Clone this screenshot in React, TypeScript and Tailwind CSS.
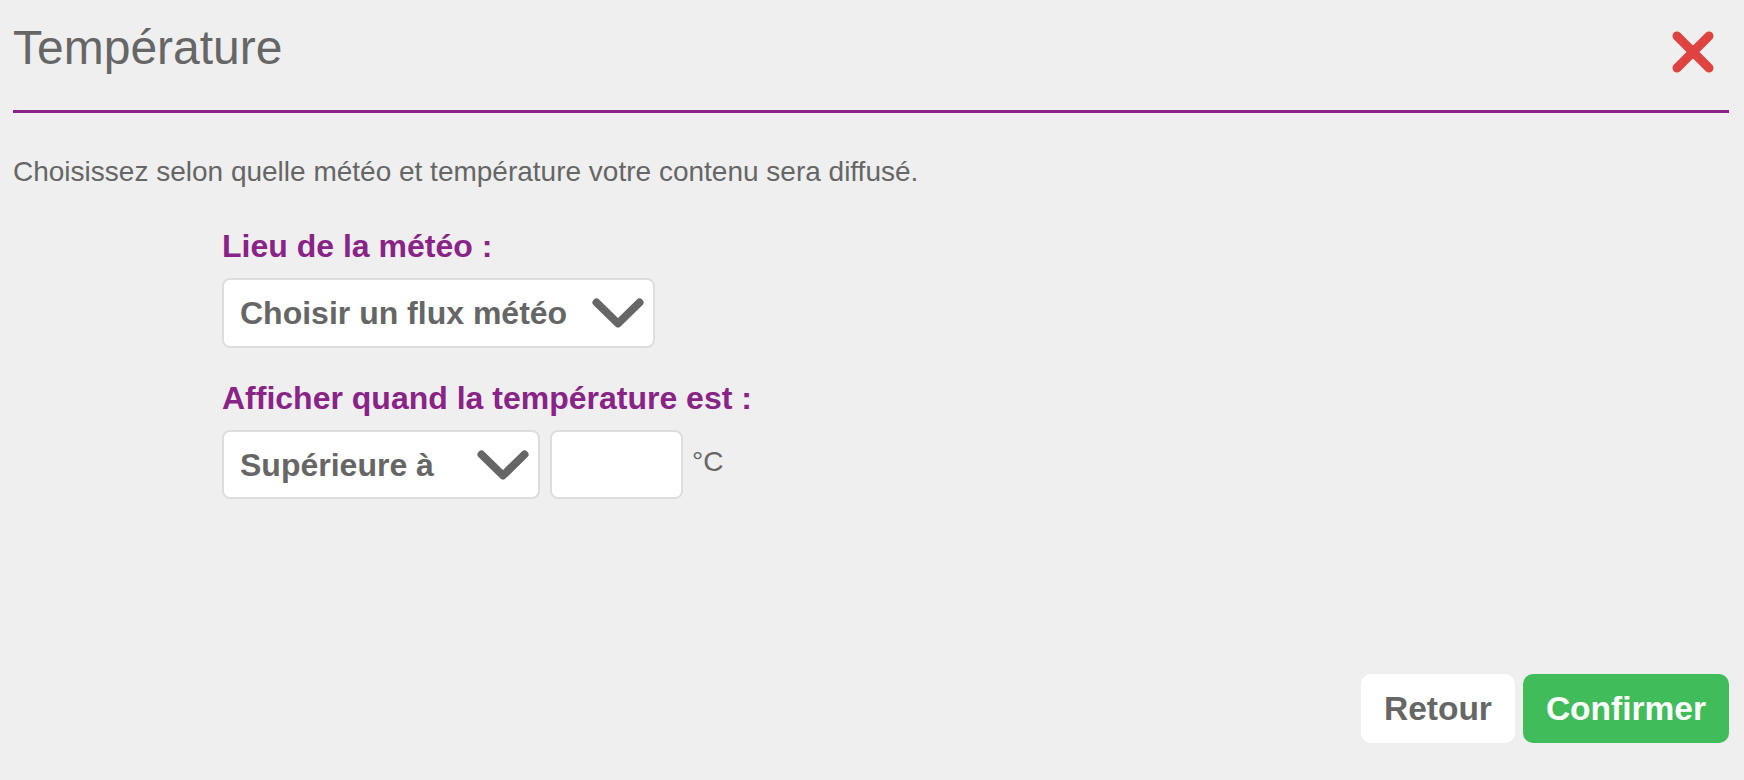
import React from "react";

function Chevron() {
  return (
    <svg width="52" height="30" viewBox="0 0 52 30" fill="none" className="shrink-0">
      <polyline
        points="4.5,4.5 26,25.5 47.5,4.5"
        stroke="#666666"
        strokeWidth="8"
        strokeLinecap="round"
        strokeLinejoin="round"
      />
    </svg>
  );
}

export default function App() {
  return (
    <div className="w-full h-[780px] bg-[#efefef] pl-[13px] pr-[15px] flex flex-col font-['Liberation_Sans',Arial,Helvetica,sans-serif] text-[#666666]">
      <div className="h-[113px] flex justify-between items-start border-b-[3px] border-[#8a2387]">
        <h1 className="mt-[24px] text-[48px] leading-none font-normal text-[#666666]">Température</h1>
        <button className="mt-[31px] mr-[15px]" aria-label="Fermer">
          <svg width="42" height="42" viewBox="0 0 42 42" fill="none">
            <line x1="5" y1="5" x2="37" y2="37" stroke="#e04141" strokeWidth="9" strokeLinecap="round" />
            <line x1="37" y1="5" x2="5" y2="37" stroke="#e04141" strokeWidth="9" strokeLinecap="round" />
          </svg>
        </button>
      </div>

      <p className="mt-[45px] text-[28px] leading-none">
        Choisissez selon quelle météo et température votre contenu sera diffusé.
      </p>

      <div className="ml-[209px] mt-[44px] flex flex-col items-start">
        <label className="text-[32px] leading-none font-bold text-[#8a2387]">Lieu de la météo :</label>
        <div className="mt-[16px] h-[70px] w-[433px] bg-white border-2 border-[#dddddd] rounded-[8px] flex items-center justify-between pl-[16px] pr-[9px]">
          <span className="text-[32px] leading-none font-bold">Choisir un flux météo</span>
          <Chevron />
        </div>

        <label className="mt-[34px] text-[32px] leading-none font-bold text-[#8a2387]">
          Afficher quand la température est :
        </label>
        <div className="mt-[16px] flex items-start">
          <div className="h-[69px] w-[318px] bg-white border-2 border-[#dddddd] rounded-[8px] flex items-center justify-between pl-[16px] pr-[9px]">
            <span className="text-[32px] leading-none font-bold">Supérieure à</span>
            <Chevron />
          </div>
          <div className="ml-[10px] h-[69px] w-[133px] bg-white border-2 border-[#dddddd] rounded-[8px]" />
          <span className="ml-[9px] mt-[18px] text-[28px] leading-none">°C</span>
        </div>
      </div>

      <div className="mt-auto pb-[37px] flex justify-end gap-[8px]">
        <button className="h-[69px] px-[23px] rounded-[10px] bg-white text-[33.5px] leading-none font-bold text-[#666666]">
          Retour
        </button>
        <button className="h-[69px] px-[23px] rounded-[10px] bg-[#40bc5b] text-[33.5px] leading-none font-bold text-white">
          Confirmer
        </button>
      </div>
    </div>
  );
}
